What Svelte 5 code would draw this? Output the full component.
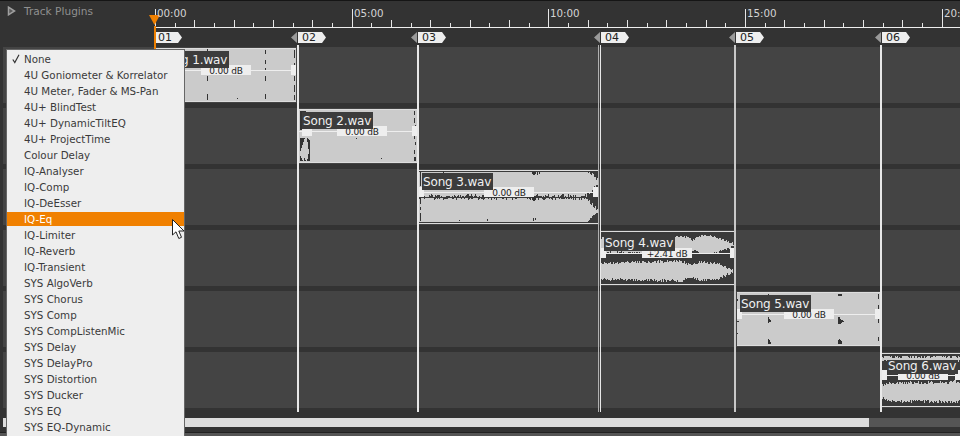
<script>
  const plugins = ['None','4U Goniometer & Korrelator','4U Meter, Fader & MS-Pan','4U+ BlindTest','4U+ DynamicTiltEQ','4U+ ProjectTime','Colour Delay','IQ-Analyser','IQ-Comp','IQ-DeEsser','IQ-Eq','IQ-Limiter','IQ-Reverb','IQ-Transient','SYS AlgoVerb','SYS Chorus','SYS Comp','SYS CompListenMic','SYS Delay','SYS DelayPro','SYS Distortion','SYS Ducker','SYS EQ','SYS EQ-Dynamic'];
  const lanes = [0,1,2,3,4,5];

  // ruler: one tick every 30 s, 19.67 px apart
  const ticks = [];
  for (let i = 0; i < 42; i++) {
    const x = Math.round(155 + i * 19.67) + .5;
    const h = i % 10 === 0 ? 18 : i % 2 === 0 ? 7 : 4;
    ticks.push(`M${x} 27V${27 - h}`);
  }
  const times = [['00:00',157],['05:00',354],['10:00',550],['15:00',747],['20:00',944]];

  const markers = [
    { n:'01', x:154, line:null },
    { n:'02', x:298, line:297 },
    { n:'03', x:418, line:417 },
    { n:'04', x:601, line:600 },
    { n:'05', x:736, line:734 },
    { n:'06', x:882, line:880 }
  ];

  function rnd(seed) {
    let s = seed;
    return () => (s = (s * 16807) % 2147483647) / 2147483647;
  }

  // solid clips get dark notches [x, y, h]; the others one envelope per channel
  const clips = [
    { name:'Song 1.wav', db:'0.00 dB', x:155, w:141, lane:0, box:46, solid:true,
      notches:[[52,0,3],[52,27,5],[52,45,6],[110,1,4],[110,11,4],[110,19,2],[110,27,5],[110,45,5],[139,1,8],[139,14,5],[139,27,5],[139,36,7],[139,46,5],[82,24,2],[82,49,1]] },
    { name:'Song 2.wav', db:'0.00 dB', x:299, w:118, lane:1, box:38, solid:true,
      dark:'M1 1H7V20H1ZM1 28H6L1 42ZM8 28L11 30V51H8L10 42ZM1 45L4 51H1ZM5 47L7 51H5Z',
      hl:[3,10],
      notches:[[115,1,4],[115,8,5],[116,15,4],[115,25,4],[116,32,3],[115,40,4],[115,47,4],[116,47,4],[82,48,1],[57,28,1]] },
    { name:'Song 3.wav', db:'0.00 dB', x:419, w:179, lane:2, box:65,
      notches:[[1,1,14],[1,27,6],[1,36,3],[1,42,8],[24,0,2],[113,1,2],[114,1,3],[115,1,3],[116,1,2],[118,1,3],[120,1,2],[113,25,4],[114,24,6],[115,25,5],[116,26,3],[114,47,3],[116,47,2],[68,48,2],[40,49,1]],
      channels:[
        { c:11, lo:1, hi:26, pts:[[0,14],[.93,14],[1,1]], noise:2 },
        { c:40, lo:27, hi:51, pts:[[0,13],[.93,13],[1,1]], noise:2 }
      ] },
    { name:'Song 4.wav', db:'+2.41 dB', x:601, w:134, lane:3, box:41,
      channels:[
        { c:13, lo:2, hi:21, pts:[[0,7],[.62,9],[.68,5],[.76,10],[.86,8],[.97,2],[1,1]], noise:1.2 },
        { c:39, lo:28, hi:50, pts:[[0,8],[.6,10],[.66,6],[.74,9],[.86,8],[.97,2],[1,1]], noise:1.4 }
      ] },
    { name:'Song 5.wav', db:'0.00 dB', x:737, w:143, lane:4, box:47, solid:true,
      notches:[[31,1,3],[31,24,6],[31,46,5],[32,26,3],[33,27,2],[32,47,4],[33,49,2],[101,1,2],[102,1,2],[103,1,2],[104,1,2],[101,24,7],[102,24,7],[103,26,5],[104,27,3],[105,27,2],[106,28,1],[101,47,4],[102,46,5],[103,47,4],[104,48,3],[0,6,2],[0,28,1],[1,28,1],[0,40,1],[141,1,5],[141,12,4],[141,26,4],[141,44,4]] },
    { name:'Song 6.wav', db:'0.00 dB', x:882, w:78, lane:5, box:16, titleTop:6, titleLeft:5, titleH:14,
      channels:[
        { c:5, lo:2, hi:8, pts:[[0,3],[1,3]], noise:2.5 },
        { c:38, lo:22, hi:50, pts:[[0,6],[.05,9],[1,10]], noise:1.8 }
      ] }
  ];

  function envelope(pts, f) {
    for (let i = 1; i < pts.length; i++) {
      if (f <= pts[i][0]) {
        const [a, ha] = pts[i - 1], [b, hb] = pts[i];
        return ha + (hb - ha) * (f - a) / (b - a);
      }
    }
    return pts[pts.length - 1][1];
  }

  function wavePath(clip, seed) {
    const r = rnd(seed * 7919 + 11);
    if (clip.solid) return `M0 0H${clip.w}V52H0Z`;
    let d = '';
    for (const ch of clip.channels) {
      for (let x = 0; x < clip.w; x++) {
        const e = envelope(ch.pts, x / clip.w);
        const y1 = Math.max(ch.lo, Math.round(ch.c - e - (r() - .5) * ch.noise * 2));
        const y2 = Math.min(ch.hi, Math.round(ch.c + e + (r() - .5) * ch.noise * 2));
        if (y2 > y1) d += `M${x + .5} ${y1}V${y2}`;
      }
    }
    return d;
  }
  const notchPath = (clip) => (clip.notches || []).map(([x, y, h]) => `M${x + .5} ${y}v${h}`).join('');
  const laneTop = (i) => i * 61 + 2;
</script>

<div class="app">
  <div class="head">
    <div class="side">
      <svg class="expand" width="9" height="10" viewBox="0 0 9 10" aria-hidden="true"><path d="M1.500 1.200L7.500 5L1.500 8.800Z" fill="#5a5a5a" stroke="#a0a0a0" stroke-width="1.500"/></svg>
      <span>Track Plugins</span>
    </div>
    <svg class="ruler" width="960" height="28" aria-hidden="true">
      <rect x="154" y="27" width="806" height="1" fill="#eee"/>
      <path d={ticks.join('')} stroke="#e6e6e6" fill="none"/>
      <path d="M149 15H160L154.500 25Z" fill="#f08000"/>
    </svg>
    {#each times as [t, x]}
      <span class="time" style="left:{x}px">{t}</span>
    {/each}
  </div>

  <div class="marks">
    {#each markers as m}
      <div class="mark" style="left:{m.x}px">
        {#if m.line}<i class="tri"></i>{/if}
        <b>{m.n}</b>
      </div>
    {/each}
  </div>

  <div class="tracks">
    {#each lanes as l}
      <div class="lane"></div>
    {/each}

    {#each clips as c, i}
      <div class="clip" style="left:{c.x}px;top:{laneTop(c.lane)}px;width:{c.w}px">
        <svg width={c.w} height="52" aria-hidden="true" shape-rendering="crispEdges">
          <path d={wavePath(c, i + 1)} fill={c.solid ? '#cbcbcb' : 'none'} stroke={c.solid ? 'none' : '#cbcbcb'}/>
          {#if c.dark}<path d={c.dark} fill="#333"/>{/if}
          <path d={notchPath(c)} stroke="#333" fill="none"/>
        </svg>
        <i class="gain"></i>
        <i class="hnd hl" style={c.hl ? `left:${c.hl[0]}px;width:${c.hl[1]}px` : ''}></i>
        <i class="hnd hr"></i>
        <span class="db" style="left:{c.box}px">{c.db}</span>
        <span class="title" style="left:{c.titleLeft ?? 3}px;top:{c.titleTop ?? 2}px;height:{c.titleH ?? 17}px;line-height:{c.titleH ? 13 : 18}px">{c.name}</span>
      </div>
    {/each}

    {#each markers as m}
      {#if m.line}
        <i class="cut" class:dbl={m.n === '04'} class:dim={m.n === '05'} style="left:{m.line}px"></i>
      {/if}
    {/each}
    <i class="play"></i>
  </div>

  <div class="foot">
    <div class="scroll"><div class="thumb"></div></div>
    <div class="status"></div>
  </div>

  <div class="menu">
    {#each plugins as p, i}
      <div class="item" class:on={p === 'IQ-Eq'}>
        {#if i === 0}
          <svg class="check" width="8" height="10" viewBox="0 0 8 10" aria-hidden="true"><path d="M.8 5.500L2.800 8.500L7 .8" fill="none" stroke="#333" stroke-width="1.200"/></svg>
        {/if}{p}
      </div>
    {/each}
  </div>

  <svg class="cursor" width="14" height="21" viewBox="0 0 14 21" aria-hidden="true">
    <path d="M.5 .5V16L4 12.800L6.800 19.500L9.500 18.300L6.800 12H12Z" fill="#fff" stroke="#222" stroke-width="1"/>
  </svg>
</div>

<style>
  :global(body) { margin: 0; background: #333; }
  .app { position: relative; width: 960px; height: 436px; overflow: hidden; background: #333; font-family: "DejaVu Sans", sans-serif; border-top: 1px solid #151515; box-sizing: border-box; }
  .head { position: relative; height: 27px; }
  .side { position: absolute; left: 7px; top: 4px; display: flex; align-items: center; gap: 8px; color: #909090; font-size: 10.600px; }
  .expand { flex: none; }
  .ruler { position: absolute; left: 0; top: -1px; }
  .time { position: absolute; top: 5px; color: #d4d4d4; font-size: 10.300px; line-height: 14px; }
  .marks { position: relative; height: 19px; }
  .mark { position: absolute; top: 4px; display: flex; height: 11px; }
  .mark b { display: block; width: 28px; height: 11px; padding-left: 4px; box-sizing: border-box; background: #eee; color: #222; font-weight: normal; font-size: 11px; line-height: 11px; clip-path: polygon(0 0, 24px 0, 100% 50%, 24px 100%, 0 100%); }
  .tri { position: absolute; left: -7px; top: 0; width: 6px; height: 11px; background: #999; clip-path: polygon(100% 0, 100% 100%, 0 50%); }
  .tracks { position: relative; padding-left: 3px; }
  .lane { height: 56px; margin-bottom: 5px; background: #444; }
  .clip { position: absolute; height: 52px; background: #3a3a3a; box-shadow: 0 -1px 0 #ddd, 0 1px 0 #ddd; }
  .clip svg { display: block; }
  .title { position: absolute; overflow: hidden; padding: 0 2px 0 1px; background: #3c3c3c; color: #f0f0f0; font-size: 12px; letter-spacing: -.150px; white-space: nowrap; }
  .gain { position: absolute; left: 0; right: 0; top: 21px; height: 1px; background: #eee; }
  .hnd { position: absolute; top: 16px; width: 5px; height: 10px; background: #eee; }
  .hl { left: 0; }
  .hr { right: 0; }
  .db { position: absolute; top: 16px; width: 50px; height: 10px; background: #eee; color: #222; font-size: 9px; letter-spacing: -.200px; line-height: 12px; text-align: center; white-space: nowrap; }
  .cut { position: absolute; top: -2px; width: 2px; height: 367px; background: #e8e8e8; }
  .cut.dbl { width: 1px; box-shadow: -2px 0 0 #b0b0b0; }
  .cut.dim { background: #c8c8c8; }
  .play { position: absolute; left: 154px; top: -21px; width: 2px; height: 24px; background: #f08000; }
  .foot { position: absolute; left: 0; right: 0; bottom: 0; height: 28px; }
  .scroll { position: absolute; left: 3px; right: 0; top: 10px; height: 9px; background: #555; }
  .thumb { width: 866px; height: 100%; background: #ddd; }
  .status { position: absolute; left: 0; right: 0; bottom: 0; height: 3px; background: #555; border-top: 1px solid #222; }
  .menu { position: absolute; left: 6px; top: 48px; width: 179px; height: 400px; box-sizing: border-box; padding-top: 2px; background: #eee; border: 1px solid #666; border-width: 1px 1px 0 1px; }
  .item { position: relative; height: 14px; margin-bottom: 2px; padding-left: 17px; color: #3a3a3a; font-size: 10.300px; line-height: 14px; white-space: nowrap; }
  .item.on { background: #f08000; color: #fff; }
  .check { position: absolute; left: 5px; top: 2px; }
  .cursor { position: absolute; left: 172px; top: 218px; }
</style>
